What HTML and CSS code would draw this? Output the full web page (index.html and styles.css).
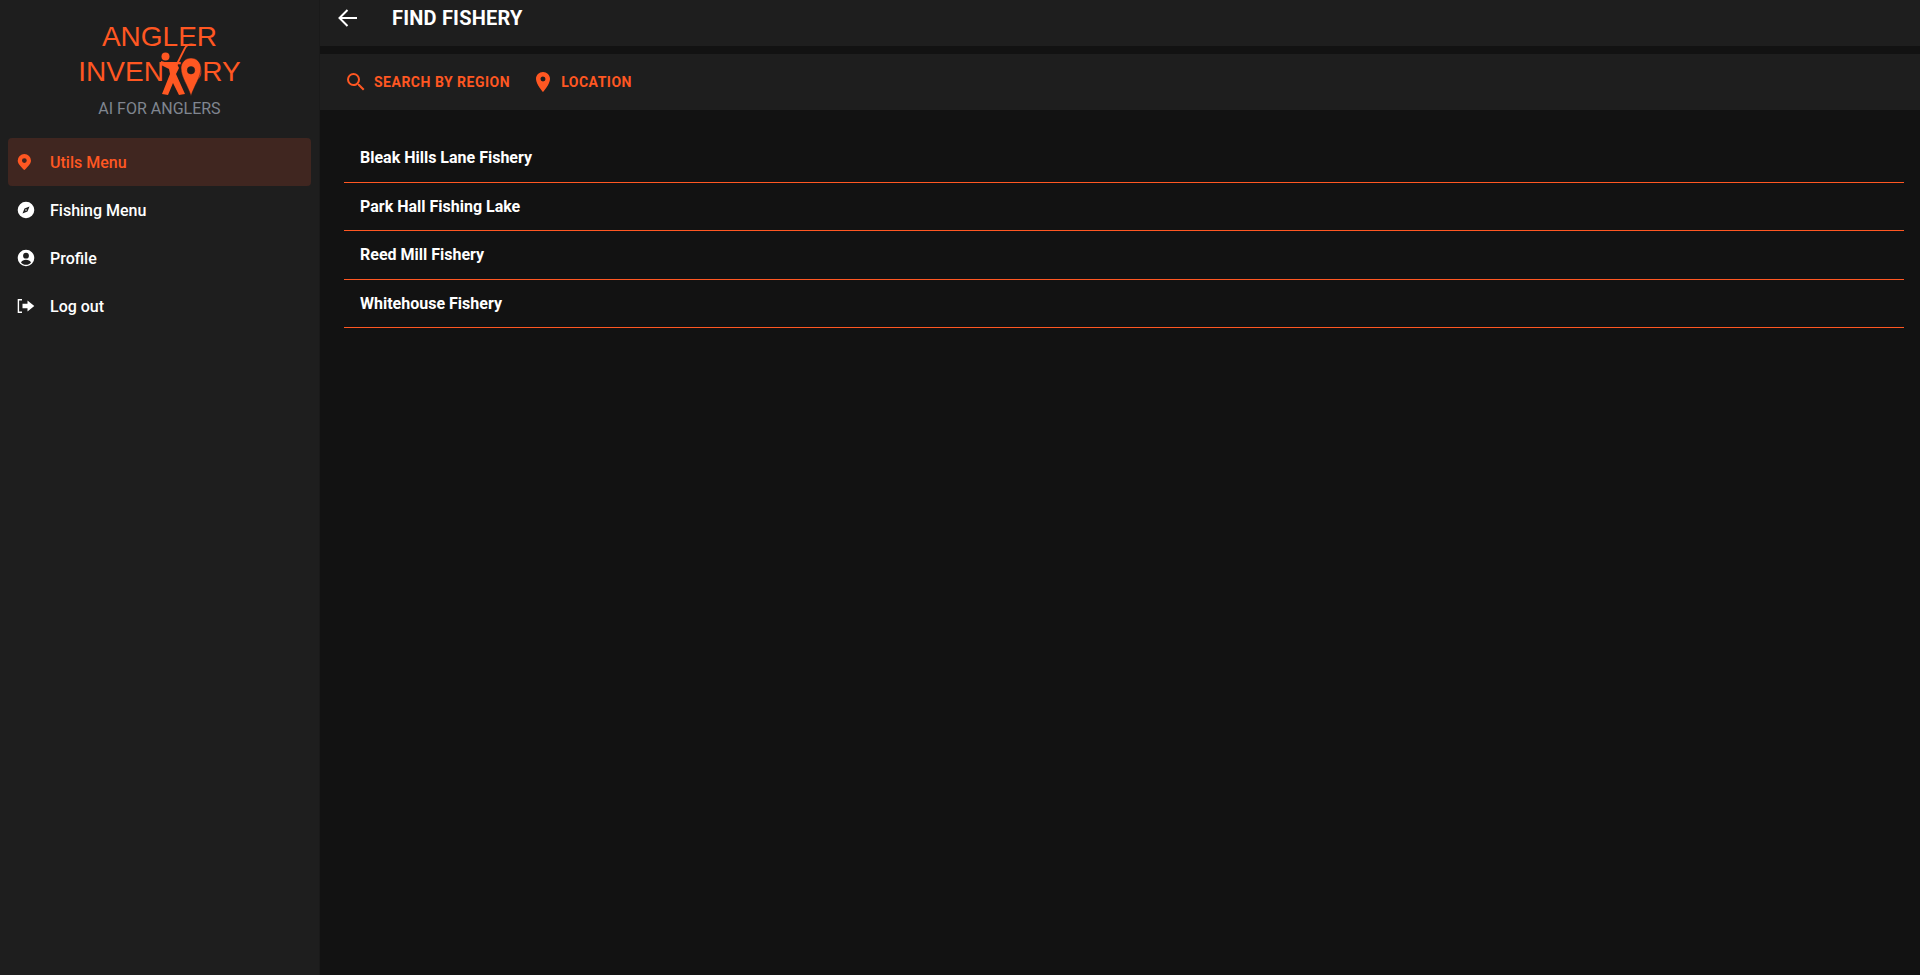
FILE: index.html
```html
<!DOCTYPE html>
<html lang="en">

<head>
    <meta charset="UTF-8">
    <meta name="viewport" content="width=device-width, initial-scale=1.0">
    <title>Angler Inventory</title>
    <link rel="stylesheet" href="styles.css">
</head>

<body>

    <div class="app">
        <aside class="sidebar">
            <div class="logo">
                <div class="logo-name">
                    <span>ANGLER</span>
                    <span>INVENTORY</span>
                    <svg class="logo-mark" viewBox="0 0 60 60">
                        <circle cx="15.500" cy="15.500" r="4" />
                        <path class="rod" d="M25 27 L35 7 Q38 2 45 4" />
                        <path d="M11 20 L22 23 L27 23 L29 27 L26 33 L35 53 L29 54 L23 42 L18 54 L12 53 L20 33 L19 28 L11 24 Z" />
                        <path class="pin" fill-rule="evenodd" d="M41 17 C47 17 51 22 51 27 C51 36 44 45 41 55 C38 45 31 36 31 27 C31 22 35 17 41 17 Z M41 25.500 A3.700 3.700 0 1 0 41.010 33 A3.700 3.700 0 1 0 41 25.500 Z" />
                    </svg>
                </div>
                <div class="logo-sub">AI FOR ANGLERS</div>
            </div>
            <nav class="menu">
                <a class="menu-item active">
                    <svg class="menu-icon" viewBox="0 0 20 20"><path fill-rule="evenodd" d="M8.350 2A6.650 6.650 0 0 1 15 8.650C15 12 10 16.500 8.350 18 6.700 16.500 1.700 12 1.700 8.650A6.650 6.650 0 0 1 8.350 2ZM8.350 6.200A2.400 2.400 0 1 0 8.360 11 2.400 2.400 0 1 0 8.350 6.200Z" /></svg>
                    <span>Utils Menu</span>
                </a>
                <a class="menu-item">
                    <svg class="menu-icon" viewBox="0 0 20 20"><path fill-rule="evenodd" d="M10 1.700A8.300 8.300 0 1 1 9.990 18.300 8.300 8.300 0 1 1 10 1.700ZM13.500 6.500 8.500 8.500 6.500 13.500 11.500 11.500ZM10 9.200A.800 .800 0 1 1 9.990 10.800 .800 .800 0 1 1 10 9.200Z" /></svg>
                    <span>Fishing Menu</span>
                </a>
                <a class="menu-item">
                    <svg class="menu-icon" viewBox="0 0 20 20"><path fill-rule="evenodd" d="M10 1.700A8.300 8.300 0 1 1 9.990 18.300 8.300 8.300 0 1 1 10 1.700ZM10 4.800A2.900 2.900 0 1 0 10.010 10.600 2.900 2.900 0 1 0 10 4.800ZM10 11.700C7.800 11.700 5.800 12.800 5 14.400 6.200 15.800 8 16.700 10 16.700S13.800 15.800 15 14.400C14.200 12.800 12.200 11.700 10 11.700Z" /></svg>
                    <span>Profile</span>
                </a>
                <a class="menu-item">
                    <svg class="menu-icon" viewBox="0 0 20 20"><path d="M1.700 3H6V4.400H3.100V15.600H6V17H1.700Z" /><path d="M11.500 4.500 18.300 10 11.500 15.500V12.300H6.500V7.700H11.500Z" /></svg>
                    <span>Log out</span>
                </a>
            </nav>
        </aside>

        <main class="content">
            <header class="topbar">
                <svg class="back-icon" viewBox="0 0 26 26"><path d="M22 13H5M12.500 5 4.500 13 12.500 21" /></svg>
                <h1 class="page-title">FIND FISHERY</h1>
            </header>

            <div class="toolbar">
                <button class="tool-button">
                    <svg class="tool-icon" viewBox="0 0 24 24"><path d="M15.500 14h-.790l-.280-.270A6.471 6.471 0 0 0 16 9.500 6.500 6.500 0 1 0 9.500 16c1.610 0 3.090-.590 4.230-1.570l.270.280v.790l5 4.990L20.490 19l-4.990-5zm-6 0C7.010 14 5 11.990 5 9.500S7.010 5 9.500 5 14 7.010 14 9.500 11.990 14 9.500 14z" /></svg>
                    <span>Search by region</span>
                </button>
                <button class="tool-button">
                    <svg class="tool-icon" viewBox="0 0 24 24"><path d="M12 2C8.130 2 5 5.130 5 9c0 5.250 7 13 7 13s7-7.750 7-13c0-3.870-3.130-7-7-7zm0 9.500a2.500 2.500 0 0 1 0-5 2.500 2.500 0 0 1 0 5z" /></svg>
                    <span>Location</span>
                </button>
            </div>

            <ul class="fishery-list">
                <li class="fishery-item">Bleak Hills Lane Fishery</li>
                <li class="fishery-item">Park Hall Fishing Lake</li>
                <li class="fishery-item">Reed Mill Fishery</li>
                <li class="fishery-item">Whitehouse Fishery</li>
            </ul>
        </main>
    </div>

</body>

</html>
```

FILE: styles.css
```css
* {
    box-sizing: border-box;
}

body {
    font-family: Roboto, Arial, sans-serif;
    margin: 0;
    padding: 0;
    height: 100vh;
    overflow: hidden;
    background-color: #121212;
    color: white;
}

.app {
    display: flex;
    height: 100%;
}

/* sidebar */
.sidebar {
    width: 320px;
    flex-shrink: 0;
    background-color: #1e1e1e;
    border-right: 1px solid #1a1a1a;
    padding: 0 8px;
}

.logo {
    display: flex;
    flex-direction: column;
    align-items: center;
    padding-top: 19px;
    height: 138px;
}

.logo-name {
    position: relative;
    display: flex;
    flex-direction: column;
    align-items: center;
    font-family: "Liberation Sans", Arial, sans-serif;
    font-size: 28px;
    line-height: 35px;
    color: #ff5722;
}

.logo-mark {
    position: absolute;
    left: 50%;
    top: 22px;
    margin-left: -10px;
    width: 60px;
    height: 60px;
    fill: #ff5722;
}

.logo-mark .rod {
    fill: none;
    stroke: #ff5722;
    stroke-width: 1.800;
}

.logo-mark .pin {
    stroke: #1e1e1e;
    stroke-width: 0.500;
}

.logo-sub {
    margin-top: 8px;
    font-size: 16px;
    line-height: 24px;
    color: #808690;
}

.menu {
    display: flex;
    flex-direction: column;
}

.menu-item {
    display: flex;
    align-items: center;
    height: 48px;
    padding-left: 8px;
    border-radius: 4px;
    font-size: 16px;
    font-weight: 500;
    color: white;
}

.menu-item.active {
    background-color: #402620;
    color: #ff5722;
}

.menu-icon {
    width: 20px;
    height: 20px;
    margin-right: 14px;
    fill: white;
    flex-shrink: 0;
}

.menu-item.active .menu-icon {
    fill: #ff5722;
}

/* main part */
.content {
    flex-grow: 1;
    min-width: 0;
}

.topbar {
    display: flex;
    align-items: center;
    height: 46px;
    padding: 0 0 10px 15px;
    background-color: #1e1e1e;
}

.back-icon {
    width: 26px;
    height: 26px;
    fill: none;
    stroke: white;
    stroke-width: 2;
}

.page-title {
    margin: 0 0 0 31px;
    font-size: 20px;
    font-weight: 700;
    letter-spacing: 0.2px;
    line-height: 36px;
}

.toolbar {
    display: flex;
    align-items: center;
    gap: 21px;
    height: 56px;
    margin-top: 8px;
    padding-left: 24px;
    background-color: #1e1e1e;
}

.tool-button {
    display: flex;
    align-items: center;
    gap: 6px;
    padding: 0;
    border: none;
    background: none;
    font-family: inherit;
    font-size: 14px;
    font-weight: 700;
    letter-spacing: 0.5px;
    text-transform: uppercase;
    color: #ff5722;
}

.tool-icon {
    width: 24px;
    height: 24px;
    fill: #ff5722;
}

.fishery-list {
    list-style: none;
    margin: 24.600px 16px 0 24px;
    padding: 0;
}

.fishery-item {
    height: 48.400px;
    padding: 11.850px 0 0 16px;
    border-bottom: 1px solid #ff5722;
    font-size: 16px;
    font-weight: 700;
    line-height: 24px;
}
```
